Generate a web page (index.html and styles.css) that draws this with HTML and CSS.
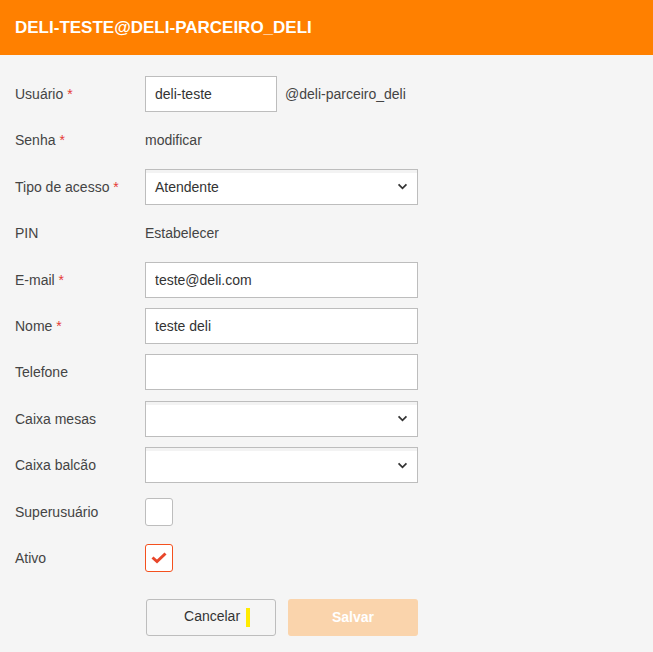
FILE: index.html
```html
<!DOCTYPE html>
<html lang="pt">
<head>
  <meta charset="UTF-8" />
  <title>Usuário</title>
  <link rel="stylesheet" href="styles.css">
</head>
<body>
  <header class="page-header">
    <h1 class="page-title">DELI-TESTE@DELI-PARCEIRO_DELI</h1>
  </header>

  <form class="user-form">
    <div class="form-row">
      <label class="form-label">Usuário <span class="req">*</span></label>
      <div class="form-field">
        <input class="text-input short" type="text" value="deli-teste">
        <span class="suffix">@deli-parceiro_deli</span>
      </div>
    </div>

    <div class="form-row">
      <label class="form-label">Senha <span class="req">*</span></label>
      <div class="form-field"><span class="link-text">modificar</span></div>
    </div>

    <div class="form-row">
      <label class="form-label">Tipo de acesso <span class="req">*</span></label>
      <div class="form-field">
        <div class="select-box"><span>Atendente</span><svg class="chevron" viewBox="0 0 12 8" width="11" height="7"><path d="M1.5 1.5 L6 6 L10.5 1.5" fill="none" stroke="#333" stroke-width="2"/></svg></div>
      </div>
    </div>

    <div class="form-row">
      <label class="form-label">PIN</label>
      <div class="form-field"><span class="link-text">Estabelecer</span></div>
    </div>

    <div class="form-row">
      <label class="form-label">E-mail <span class="req">*</span></label>
      <div class="form-field"><input class="text-input" type="text" value="teste@deli.com"></div>
    </div>

    <div class="form-row">
      <label class="form-label">Nome <span class="req">*</span></label>
      <div class="form-field"><input class="text-input" type="text" value="teste deli"></div>
    </div>

    <div class="form-row">
      <label class="form-label">Telefone</label>
      <div class="form-field"><input class="text-input" type="text" value=""></div>
    </div>

    <div class="form-row">
      <label class="form-label">Caixa mesas</label>
      <div class="form-field">
        <div class="select-box"><span></span><svg class="chevron" viewBox="0 0 12 8" width="11" height="7"><path d="M1.5 1.5 L6 6 L10.5 1.5" fill="none" stroke="#333" stroke-width="2"/></svg></div>
      </div>
    </div>

    <div class="form-row">
      <label class="form-label">Caixa balcão</label>
      <div class="form-field">
        <div class="select-box"><span></span><svg class="chevron" viewBox="0 0 12 8" width="11" height="7"><path d="M1.5 1.5 L6 6 L10.5 1.5" fill="none" stroke="#333" stroke-width="2"/></svg></div>
      </div>
    </div>

    <div class="form-row">
      <label class="form-label">Superusuário</label>
      <div class="form-field"><span class="check"></span></div>
    </div>

    <div class="form-row">
      <label class="form-label">Ativo</label>
      <div class="form-field">
        <span class="check checked"><svg viewBox="0 0 16 12" width="16" height="12"><path d="M1.5 5.5 L6 9.5 L14.5 1.5" fill="none" stroke="#e8462a" stroke-width="3"/></svg></span>
      </div>
    </div>

    <div class="form-actions">
      <button type="button" class="btn btn-cancel">Cancelar <span class="caret"></span></button>
      <button type="button" class="btn btn-save" disabled>Salvar</button>
    </div>
  </form>
</body>
</html>
```

FILE: styles.css
```css
html, body {
  margin: 0;
  padding: 0;
  background: #f5f5f5;
  font-family: 'Liberation Sans', Arial, sans-serif;
  font-size: 14px;
  color: #333;
}

.page-header {
  background: #ff8000;
  height: 55px;
  display: flex;
  align-items: center;
  padding: 0 15px;
}
.page-title {
  margin: 0;
  color: #fff;
  font-size: 17px;
  font-weight: bold;
}

.user-form {
  padding: 21px 15px 0 15px;
}
.form-row {
  display: flex;
  align-items: center;
  height: 36px;
  margin-bottom: 10.4px;
}
.form-label {
  width: 130px;
  flex: 0 0 130px;
  color: #444;
}
.req {
  color: #e53935;
}
.form-field {
  display: flex;
  align-items: center;
  gap: 8px;
}
.link-text {
  color: #444;
}
.suffix {
  color: #444;
}

.text-input {
  box-sizing: border-box;
  width: 273px;
  height: 36px;
  border: 1px solid #bdbdbd;
  background: #fff;
  padding: 0 9px;
  font-family: inherit;
  font-size: 14px;
  color: #333;
  outline: none;
}
.text-input.short {
  width: 132px;
}

.select-box {
  box-sizing: border-box;
  width: 273px;
  height: 36px;
  border: 1px solid #bdbdbd;
  background: linear-gradient(#f3f3f3 0, #f3f3f3 3px, #fff 3px);
  padding: 0 9px;
  display: flex;
  align-items: center;
  justify-content: space-between;
  color: #333;
}

.check {
  box-sizing: border-box;
  width: 28px;
  height: 28px;
  border: 1px solid #bdbdbd;
  border-radius: 3px;
  background: #fff;
  display: flex;
  align-items: center;
  justify-content: center;
}
.check.checked {
  border-color: #f4511e;
}

.form-actions {
  display: flex;
  gap: 12px;
  padding-left: 131px;
  margin-top: 23px;
}
.btn {
  box-sizing: border-box;
  width: 130px;
  height: 37px;
  border-radius: 3px;
  font-family: inherit;
  font-size: 14px;
}
.btn-cancel {
  background: #f5f5f5;
  border: 1px solid #bdbdbd;
  color: #333;
  padding-left: 18px;
}
.caret {
  display: inline-block;
  width: 4px;
  height: 19px;
  background: #ffeb00;
  vertical-align: -6px;
  margin-left: 2px;
}
.btn-save {
  background: #fad4ac;
  border: none;
  color: #fff;
  font-weight: bold;
}
```
